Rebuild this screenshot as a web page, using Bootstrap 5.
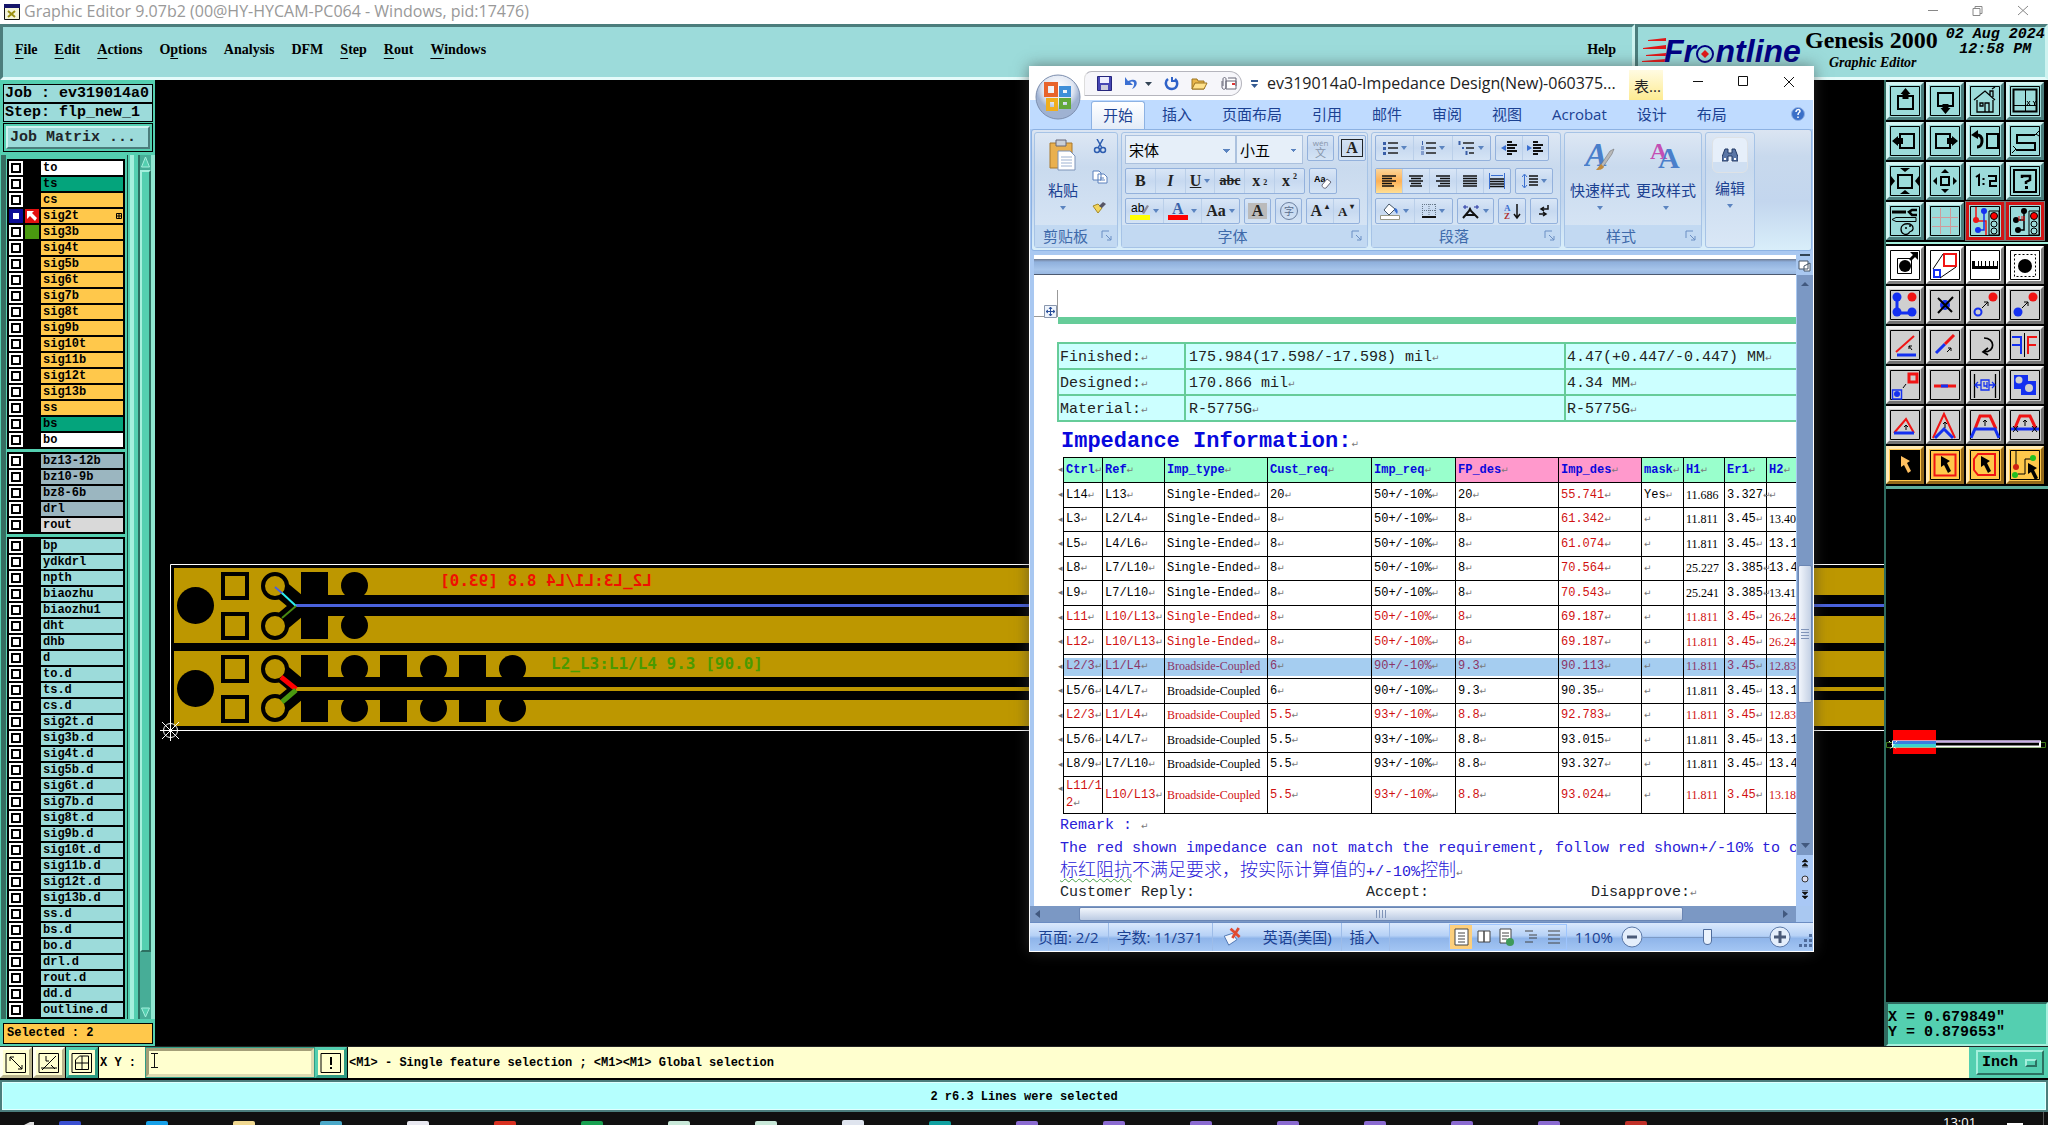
<!DOCTYPE html>
<html lang="zh-CN">
<head>
<meta charset="utf-8">
<meta name="viewport" content="width=device-width, initial-scale=1">
<title>Graphic Editor 9.07b2</title>
<link href="https://cdn.jsdelivr.net/npm/bootstrap@5.3.0/dist/css/bootstrap.min.css" rel="stylesheet">
<style>
:root{--aqua:#9cdbda;--sea:#54cfb0;--dark:#4b7d7c;--lite:#cdf3f0;--cream:#ffffcf;--gold:#ffc84b;--blue:#1b4192}
body{font-family:"Open Sans","Noto Sans CJK SC",sans-serif;background:#000;color:#000;line-height:1.2;height:100vh;overflow:hidden}
.btn{--bs-btn-padding-x:0;--bs-btn-padding-y:0;--bs-btn-border-width:0;--bs-btn-border-radius:0;line-height:1;border:0}
svg{display:block;flex:none}
.mono{font-family:"Liberation Mono",monospace}
.mono-b{font-family:"Liberation Mono",monospace;font-weight:700}
.s12{font-size:12px}.s15{font-size:15px}
.app-title{height:24px;background:#fff;color:#999;font-size:16px}
.app-menu{height:56px;font-family:"Liberation Serif",serif;font-weight:700;font-size:15px}
.bevel{background:var(--aqua);border:3px solid;border-color:var(--dark) var(--lite) #e4fbfa var(--dark)}
.app-menu a{color:#000;text-decoration:none}
.app-menu nav{gap:17px;padding-left:12px;font-size:14px;padding-bottom:3px}
.app-menu u{text-underline-offset:4px}
.brand-box{width:413px;height:56px}
.prod{font-size:24px;line-height:26px}
.prod-sub{font-size:14px;font-style:italic;line-height:20px}
.stamp{font-style:italic;font-size:15px;line-height:15px}

/* layer panel */
.side{width:155px;background:var(--sea)}
.side-box{background:var(--aqua);border:1px solid #000;height:19px;line-height:17px;padding-left:1px;margin:0 2px 0 3px;white-space:nowrap}
.matrix-frame{border:1px solid #000;margin:1px 2px 3px 3px;padding:2px;height:29px}
.matrix-btn{width:100%;height:23px;background:var(--aqua);border:2px solid;border-color:var(--lite) var(--dark) var(--dark) var(--lite);text-align:left;padding-left:2px}
.list-edge{width:7px;background:#376e62;border-left:1px solid var(--sea);border-right:1px solid var(--sea)}
.list-stripe{width:13px;background:linear-gradient(90deg,var(--sea) 0 2px,#17493d 2px 3px,var(--sea) 3px 5px,#a5f0dd 5px 9px,var(--sea) 9px)}
.lyr-group{background:#000;padding:2px 2px 2px 2px;display:flex;flex-direction:column;gap:2px;margin-bottom:3px;width:118px}
.lyr{display:flex;gap:2px;height:14px}
.lyr input{appearance:none;width:14px;height:14px;border:2px solid #fff;background:#fff;box-shadow:inset 0 0 0 2px #000;margin:0;flex:none}
.lyr.act input{border-color:#0b0b96;box-shadow:inset 0 0 0 2px #0b0b96}
.lyr .sw{width:14px;flex:none}
.lyr .nm{width:82px;background:var(--bg);line-height:14px;font-size:12px;padding-left:2px;white-space:nowrap;display:flex;justify-content:space-between;align-items:center}
.vs{width:17px;border-left:2px solid #2c7162;border-right:4px solid #8fe6d0;background:#47ad97}
.vs .th{height:782px;background:var(--sea);border:2px solid;border-color:#a5f0dd #2c7162 #2c7162 #a5f0dd}
.picked{background:var(--gold);border:1px solid #000;height:21px;line-height:19px;margin:4px 2px 2px 3px;padding-left:3px}

/* tool palette */
.pal{width:164px;background:#000;border-left:2px solid #2f6b60}
.pal-grid{display:grid;grid-template-columns:repeat(4,38px);gap:2px;padding:2px 0 2px 0}
.pal-split{border-top:2px solid #a5f0dd}
.tool{width:38px;height:38px;background:var(--aqua);border:3px solid !important;border-color:#d3f4f2 var(--dark) var(--dark) #d3f4f2 !important;padding:1px !important;display:block}
.tool.g{background:#cfcfcf;border-color:#f3f3f3 #737373 #737373 #f3f3f3 !important}
.tool.w{background:#fff;border-color:#fff #808080 #808080 #fff !important}
.tool.o{background:var(--gold);border-color:#ffe9b4 #93691a #93691a #ffe9b4 !important}
.tool.r{background:var(--aqua);border-color:#d11414 !important;outline:1px solid #777}
.mini{border-top:3px solid #5fae9c}
.readout{background:var(--sea);border:2px solid;border-color:#2f6b60 #a5f0dd #a5f0dd #2f6b60;height:44px;padding:6px 0;line-height:15px;font-size:15px;white-space:pre}

/* bottom bars */
.cmd{height:34px;border-bottom:2px solid #000;border-top:1px solid #222}
.cmd .cell{background:var(--cream);display:flex;align-items:center;padding-top:2px}
.cmd .tag{width:46px;padding-left:1px}
.cmd .msg{padding-left:1px}
.cbtn{width:32px;background:var(--cream);border:3px solid !important;border-color:#fffff0 #b9b48c #b9b48c #fffff0 !important;padding:1px 2px !important;margin-right:1px}
.cbtn.t{border-color:var(--sea) #2f9c84 #2f9c84 var(--sea) !important}
.xy{width:170px;height:31px;background:var(--cream);border:4px solid;border-color:#a39f78 #dedbb2 #dedbb2 #a39f78;outline:1px solid #2f9c84;outline-offset:-1px;font-size:13px;padding:0 2px;border-radius:0}
.ibeam{position:absolute;left:6px;top:6px}
.unit{width:79px;background:var(--sea);padding:3px 4px 3px 7px}
.unit select{width:100%;height:100%;appearance:none;background:var(--sea);border:2px solid;border-color:#a5f0dd #2c7162 #2c7162 #a5f0dd;padding:0 0 0 4px;font-size:15px;border-radius:0;color:#000}
.unit i{width:12px;height:8px;border:2px solid;border-color:#a5f0dd #2c7162 #2c7162 #a5f0dd;position:absolute;right:11px;top:12px}
.stat{height:32px;background:#b5fffe;border:2px solid #4b7d7c;outline:1px solid #dffffe;outline-offset:-3px;text-align:center;line-height:30px}
.task{height:13px;background:#101010;position:relative;overflow:hidden}
.task .clock{position:absolute;left:1943px;top:3px;color:#fff;font-size:13px}

/* document window */
.ww{position:absolute;right:234px;top:66px;width:785px;height:886px;background:#a9c8f1;border:1px solid #fff;box-shadow:0 0 14px rgba(60,60,60,.6);color:var(--blue);font-size:15px}
.ww .btn{color:var(--blue)}
.ww-title{height:33px;background:#fff;color:#222}
.qat{margin-left:54px;height:25px;width:158px;border:1px solid #b5b5bd;border-left-color:#ddd;border-radius:8px 13px 13px 0;background:#f6f6fa;gap:12px;padding-left:12px}
.orb{position:absolute;left:5px;top:7px;z-index:2}
.doc-name{width:360px;text-align:center;font-size:16px}
.ctx{width:34px;height:30px;background:linear-gradient(#fffbe2,#fdeb92);font-size:15px;line-height:32px;padding-left:5px;margin-top:3px;white-space:nowrap;color:#222}
.tabs{height:29px;background:#bfdbff;padding-left:61px}
.tabs a{padding:0 15px;line-height:29px;color:var(--blue);text-decoration:none;white-space:nowrap}
.tabs a.on{padding:0 11px;margin:1px 2px 0 0;background:linear-gradient(#fff,#e3ecf8);border:1px solid #8db2e3;border-bottom:0;border-radius:3px 3px 0 0;line-height:27px}
.tabs a:last-of-type{margin-right:auto}
.rib{height:122px;margin:0 1px;border:1px solid #8db2e3;border-radius:3px;background:linear-gradient(#dbe5f2,#c8d9ed 22%,#c3d6ee 60%,#d9eefa);padding:2px 2px;gap:3px}
.grp{border:1px solid #a6c3e6;border-radius:3px;display:flex;flex-direction:column;background:linear-gradient(#dde7f4,#c9daee 30%,#d9e7f6)}
.grp>.bd{height:93px;padding:2px 3px 0}
.grp>.cap{height:22px;line-height:22px;background:#c2d9f2;color:#3e6aaa;text-align:center;position:relative}
.grp>.cap svg{position:absolute;right:5px;top:5px}
.rb{border:1px solid #93b1dc;border-radius:2px;height:26px;display:flex;background:linear-gradient(#d9e6f6,#c7d9f0 50%,#d5e4f5);flex:none}
.rb .btn{flex:1 1 0;display:flex;align-items:center;justify-content:center;gap:3px;color:#222;border-right:1px solid #bacfe9}
.rb .btn:last-child{border-right:0}
.rb .btn.on{background:linear-gradient(#fbd59b,#fdb156 50%,#ffdf94)}
.w28{width:28px}.w27{width:27px}
.crt{border:3px solid transparent;border-top:4px solid #5b84c0;border-bottom:0;width:6px;height:4px;display:inline-block}
.rsel{appearance:none;border:1px solid #abc1de;background:#e6eff9;height:29px;color:#000;font-size:15px;padding:0 3px;border-radius:0;background-image:linear-gradient(45deg,transparent 50%,#5b84c0 50%),linear-gradient(-45deg,transparent 50%,#5b84c0 50%);background-size:4px 4px;background-position:calc(100% - 8px) 13px,calc(100% - 5px) 13px;background-repeat:no-repeat}
.ser{font-family:"Liberation Serif",serif;font-weight:700;font-size:16px}
.wen{flex-direction:column;gap:0 !important;font-size:8px;color:#8795ab !important}
.wen b{font-size:11px;font-weight:400;line-height:11px}
.big{display:flex;flex-direction:column;align-items:center;font-size:15px !important;white-space:nowrap}
.find{width:36px;height:36px;background:linear-gradient(#e6effa 70%,#cfdff2 70%)}
.band{height:16px;background:linear-gradient(#6f7b93,#8fb0dc 20%,#a6c4ea 70%,#9ab9e2);border-bottom:1px solid #4d5a70;margin-left:4px}
.page{background:#fff;margin-left:4px;overflow:hidden;position:relative}
.pad-page{padding-left:23px;padding-top:42px}
.rule{height:7px;background:#66cc99;margin-left:1px}
.t1{border-collapse:collapse;table-layout:fixed;width:800px;margin-top:18px;color:#222;font-size:15px}
.t1 td{border:2px solid #66cc99;background:#ccffff;height:26px;padding:3px 0 0 1px;line-height:20px}
.t1 td.val{padding-left:3px}
.h-imp{font-size:22px;color:#0808dd;margin:3px 0 0 4px;line-height:34px;height:32px;white-space:nowrap}
.t2{border-collapse:collapse;table-layout:fixed;width:764px;margin-left:6px;font-size:12px;color:#000}
.t2 td,.t2 th{border:1px solid #000;height:25px;padding:0 0 0 2px;line-height:17px;white-space:nowrap;position:relative}
.t2 tr:nth-child(even) td{height:24px}
.t2 th{background:#99ffcc;color:#0808dd}
.t2 th.pk{background:#ff99cc}
.t2 .rd,.t2 td.rd{color:#d01010}
.t2 .nar{font-family:"Liberation Serif",serif;font-size:12px}
.t2 tr.sel td{background:linear-gradient(#a5cdf0,#a5cdf0) center/100% 18px no-repeat;color:#8b3566}
.t2 tr:last-child td{height:37px}
.t2 tr>:first-child::before{content:"◂";position:absolute;left:-6px;top:6px;color:#777;font:9px "DejaVu Sans",sans-serif}
.pm{font-family:"DejaVu Sans",sans-serif;font-weight:400;font-size:9px;color:#777}
.note{color:#2a20d8;font-size:15px;line-height:23px;height:23px;white-space:pre;padding-left:3px}
.zh{font-size:18px;line-height:22px;font-family:"Liberation Mono","Noto Sans CJK SC",sans-serif;font-weight:300;height:21px}
.zh span.l{font-size:15px}
.squig{text-decoration:underline wavy #4aa04a 1px;text-underline-offset:2px}
.vbar{width:17px;background:#7b98c4;border-left:1px solid #a9c8f1}
.vbar .foot{background:#a9c8f5;height:51px}
.vbar .gap-low{height:136px}
.vthumb{height:138px;margin:0 1px;background:linear-gradient(90deg,#f2f6fc,#c3d0e4);border:1px solid #6b86b4;border-radius:2px;display:flex;align-items:center;justify-content:center}
.hbar{height:16px;background:#7b98c4;margin-right:17px}
.hthumb{width:604px;height:14px;background:linear-gradient(#f2f6fc,#bccbe3);border:1px solid #6b86b4;border-radius:2px;display:flex;align-items:center;justify-content:center}
.wstat{height:29px;background:linear-gradient(#dbe9fc,#b6d1f6 45%,#8fb5ea 55%,#a4c6f3);border-top:1px solid #6b8cc2;line-height:28px;white-space:nowrap}
.wstat .c{padding:0 9px 0 8px;border-right:1px solid #9dbce8}
.zr{width:126px;height:16px;appearance:none;background:linear-gradient(#7c9ac6,#7c9ac6) center/100% 1px no-repeat;margin:0}
.zr::-webkit-slider-thumb{appearance:none;width:9px;height:16px;background:#eaf2fc;border:1px solid #4f6c9c;border-radius:1px 1px 5px 5px}
</style>
<script src="https://cdn.jsdelivr.net/npm/bootstrap@5.3.0/dist/js/bootstrap.bundle.min.js"></script>
</head>
<body class="d-flex flex-column position-relative">

<header class="app-title d-flex align-items-center ps-1">
  <svg width="16" height="16" viewBox="0 0 16 16" class="me-1"><path d="M.5.5h15v15H.5z" fill="#f4f4d8" stroke="#111"/><path d="M0 0h16v4H0z" fill="#15156a"/><path d="M4 7l7 6M11 7l-7 6" stroke="#998f10" stroke-width="2"/></svg>
  <span class="flex-grow-1">Graphic Editor 9.07b2 (00@HY-HYCAM-PC064 - Windows, pid:17476)</span>
  <svg width="130" height="24" viewBox="0 0 130 24" fill="none" stroke="#888"><path d="M10 10.500h10M55 8.500h7v7h-7zM57 8V6.500h7v7h-2M100 6l10 9M110 6l-10 9"/></svg>
</header>

<div class="app-menu d-flex">
  <div class="bevel flex-grow-1 d-flex align-items-center">
    <nav class="d-flex flex-grow-1">
      <a href="#"><u>F</u>ile</a><a href="#"><u>E</u>dit</a><a href="#"><u>A</u>ctions</a><a href="#">O<u>p</u>tions</a><a href="#">Analysis</a><a href="#">DFM</a><a href="#"><u>S</u>tep</a><a href="#"><u>R</u>out</a><a href="#"><u>W</u>indows</a>
      <a href="#" class="ms-auto me-3">Help</a>
    </nav>
  </div>
  <div class="bevel brand-box d-flex">
    <svg width="167" height="44" viewBox="-3 0 167 44"><path d="M7 13l18-2v3L7 14zM2 21l23-3v4L2 22zM5 28l20-2v3L5 29zM1 34l24-2v3L1 35z" fill="#e01818"/><text x="23" y="35" font-family="Liberation Sans" font-weight="700" font-style="italic" font-size="32" fill="#000083">Fr<tspan fill="none">o</tspan>ntline</text><circle cx="64" cy="27" r="8" fill="#9cdbda" stroke="#000083" stroke-width="2"/><path d="M64 23l4 4-4 4-4-4z" fill="#e01818"/></svg>
    <div class="text-nowrap"><div class="prod">Genesis 2000</div><div class="prod-sub ps-4">Graphic Editor</div></div>
    <div class="stamp mono-b text-nowrap text-center ms-1 ps-1">02 Aug 2024<br>12:58 PM</div>
  </div>
</div>

<main class="d-flex flex-grow-1 overflow-hidden">
  <aside class="side d-flex flex-column pt-1 flex-shrink-0">
    <div class="side-box mono-b s15">Job : ev319014a0</div>
    <div class="side-box mono-b s15">Step: flp_new_1</div>
    <div class="matrix-frame"><button class="matrix-btn btn mono-b s15">Job Matrix ...</button></div>
    <div class="d-flex flex-grow-1 overflow-hidden">
      <div class="list-edge"></div>
      <div id="layers" class="mono-b pt-1"></div>
      <div class="list-stripe"></div>
      <div class="vs d-flex flex-column justify-content-between">
        <div><svg width="11" height="15"><path d="M5.500 2l4 10h-8z" fill="#54cfb0" stroke="#a5f0dd"/></svg><div class="th"></div></div>
        <svg width="11" height="13"><path d="M1.500 2h8l-4 9z" fill="#54cfb0" stroke="#a5f0dd"/></svg>
      </div>
    </div>
    <div class="picked mono-b s12">Selected : 2</div>
  </aside>

  <section class="flex-grow-1 overflow-hidden">
    <svg width="100%" height="966" role="img" aria-label="board">
      <g transform="translate(-155,-80)">
        <path d="M2200 564.500H170.500V730.500H2200" fill="none" stroke="#fff"/>
        <path d="M174 568h2000v75H174zM174 651h2000v75H174z" fill="#bd9700"/>
        <g fill="#000">
          <path d="M300 595h1900v21H300zM300 677h1900v10H300zM300 691h1900v9H300z"/>
          <path d="M301 572h27v67h-27zM301 655h27v32h-27zM301 691h27v31h-27zM380 655h27v32h-27zM380 691h27v31h-27zM459 655h27v32h-27zM459 691h27v31h-27z"/>
          <circle cx="195.500" cy="605.500" r="18.500"/><circle cx="195.500" cy="688.500" r="18.500"/>
          <circle cx="354.500" cy="585.500" r="13.500"/><circle cx="354.500" cy="625.500" r="13.500"/>
          <circle cx="354.500" cy="668.500" r="13.500"/><circle cx="354.500" cy="708.500" r="13.500"/><circle cx="433.500" cy="668.500" r="13.500"/><circle cx="433.500" cy="708.500" r="13.500"/><circle cx="512.500" cy="668.500" r="13.500"/><circle cx="512.500" cy="708.500" r="13.500"/>
        </g>
        <g fill="none" stroke="#000" stroke-width="18"><path d="M277 586l24 20-24 20M277 669l24 20-24 20"/></g>
        <g fill="#bd9700" stroke="#000" stroke-width="4"><path d="M223 574h24v24h-24zM223 614h24v24h-24zM223 657h24v24h-24zM223 697h24v24h-24z"/><circle cx="275" cy="586" r="12"/><circle cx="275" cy="626" r="12"/><circle cx="275" cy="669" r="12"/><circle cx="275" cy="708" r="12"/></g>
        <path d="M296 689h1900" stroke="#bd9700" stroke-width="4"/>
        <g fill="none"><path d="M296 605.500h1900" stroke="#4a62dc" stroke-width="3"/><path d="M275 587l8 7" stroke="#4a62dc" stroke-width="2"/><path d="M282 593l14 13" stroke="#2cf0f0" stroke-width="2"/><path d="M296 606l-14 12" stroke="#4a8a12" stroke-width="2"/><path d="M281 677l15 12" stroke="#f00" stroke-width="5"/><path d="M296 690l-14 12" stroke="#4a9a10" stroke-width="5"/></g>
        <text transform="translate(652,586) scale(-1,1)" fill="#f01000" font-family="DejaVu Sans Mono" font-weight="700" font-size="16">L2_L3:L1/L4 8.8 [93.0]</text>
        <text x="551" y="669" fill="#4a9a00" font-family="DejaVu Sans Mono" font-weight="700" font-size="16">L2_L3:L1/L4 9.3 [90.0]</text>
        <g stroke="#fff" fill="none"><circle cx="170.500" cy="730.500" r="7"/><path d="M160 730.500h21M170.500 720v21M162 722l17 17M179 722l-17 17"/></g>
      </g>
    </svg>
  </section>

  <aside class="pal d-flex flex-column flex-shrink-0">
    <div class="pal-grid" id="nav-tools"></div>
    <div class="pal-grid pal-split" id="edit-tools"></div>
    <div class="flex-grow-1 overflow-hidden mini">
      <svg width="162" height="500" role="img" aria-label="overview"><g transform="translate(-1886,-490)"><path d="M1893 731h43v24h-43z" fill="#f00"/><path d="M1886.500 743.500h159v5h-159z" fill="none" stroke="#3f7a18"/><path d="M1893 742.500h147v5h-147z" fill="#000" stroke="#fff" stroke-width="2"/><path d="M1893 742.500h147" stroke="#c9aee8" stroke-width="2"/><path d="M1893 742h43v3h-43z" fill="#3b7fe0"/><path d="M1893 745h43v3h-43z" fill="#3cd2cf"/><path d="M1889 742l8 9M1897 742l-8 9" stroke="#fff" stroke-dasharray="2"/></g></svg>
    </div>
    <div class="readout mono-b">X = 0.679849"
Y = 0.879653"</div>
  </aside>
</main>

<div class="cmd d-flex flex-shrink-0">
  <button class="btn cbtn" aria-label="diagonal"><svg width="22" height="22" viewBox="0 0 22 22" fill="none" stroke="#000"><path d="M1 1.500h19.500v19H1zM5 5l12 12M5 9V5h4M17 13v4h-4"/></svg></button>
  <button class="btn cbtn" aria-label="angle"><svg width="22" height="22" viewBox="0 0 22 22" fill="none" stroke="#000"><path d="M1 1.500h19.500v19H1zM4 18L18 4M8 4v5h3M3 16h16M13 13l4 4"/></svg></button>
  <button class="btn cbtn t" aria-label="grid"><svg width="22" height="22" viewBox="0 0 22 22" fill="none" stroke="#000"><path d="M1 1.500h19.500v19H1zM4.500 17.500V8l4-4h9v13.500zM11 4v13M4 11h13.500"/></svg></button>
  <label for="xy" class="cell tag mono-b s12">X Y :</label>
  <div class="position-relative"><input id="xy" class="xy mono" value=""><svg class="ibeam" width="7" height="15"><path d="M0 .5h7M3.500 0v15M0 14.500h7" stroke="#111"/></svg></div>
  <button class="btn cbtn t" aria-label="alert"><svg width="22" height="22" viewBox="0 0 22 22" fill="none" stroke="#000"><path d="M1 1.500h19.500v19H1z"/><path d="M11 5v8M11 15v2" stroke-width="2"/></svg></button>
  <div class="cell msg mono-b s12 flex-grow-1">&lt;M1&gt; - Single feature selection ; &lt;M1&gt;&lt;M1&gt; Global selection</div>
  <div class="unit position-relative"><select class="mono-b" aria-label="Unit"><option>Inch</option></select><i></i></div>
</div>
<div class="stat mono-b s12 flex-shrink-0">2 r6.3 Lines were selected</div>
<footer class="task flex-shrink-0">
  <svg width="100%" height="13" id="taskicons"></svg>
  <span class="clock">13:01</span>
</footer>

<section class="ww d-flex flex-column" aria-label="ev319014a0-Impedance Design">
  <svg class="orb" width="46" height="46" viewBox="0 0 46 46"><defs><radialGradient id="og" cy=".3"><stop offset="0" stop-color="#fff"/><stop offset=".7" stop-color="#dfe6f2"/><stop offset="1" stop-color="#9fb2d2"/></radialGradient></defs><circle cx="23" cy="23" r="22" fill="url(#og)" stroke="#7c8eae"/><g fill="none" stroke-width="4"><path d="M11 10h10v11H11z" stroke="#e8642c"/><path d="M26 14h8v7h-8z" stroke="#3f8fd8"/><path d="M13 26h8v9h-8z" stroke="#f0ae1e"/><path d="M26 26h8v7h-8z" stroke="#62a83a"/></g></svg>
  <div class="ww-title d-flex align-items-center">
    <div class="qat d-flex align-items-center">
      <svg width="15" height="15" viewBox="0 0 15 15"><path d="M.5.5h14v14H.5z" fill="#4646b4" stroke="#25257c"/><path d="M3 1h9v6H3z" fill="#eef"/><path d="M4 9h7v5H4z" fill="#ccd"/></svg>
      <svg width="28" height="15" viewBox="0 0 28 15"><path d="M1 1v8h8L6 6c4-2 6 2 2 7 7-3 6-11-1-9L4 5z" fill="#3b6fd2"/><path d="M21 6h7l-3.500 4z" fill="#345"/></svg>
      <svg width="15" height="15" viewBox="0 0 15 15" fill="none" stroke="#2f62c8" stroke-width="2.500"><path d="M4 3c-4 3-2 10 4 10 5 0 7-6 3-10"/><path d="M8 1v4h5" stroke-width="2"/></svg>
      <svg width="17" height="15" viewBox="0 0 17 15"><path d="M1 13V3h5l1 2h6v8z" fill="#e9b64a" stroke="#9c7420"/><path d="M1 13l3-6h12l-3 6z" fill="#ffe18a" stroke="#9c7420"/></svg>
      <svg width="17" height="15" viewBox="0 0 17 15" fill="#fff" stroke="#667"><path d="M6 5h10v8H6zM8 2h8v8"/><path d="M2 5v6c0 3 4 3 4 0V3c0-2-3-2-3 0v7" fill="none"/><path d="M12 7h3v2h-3z" fill="#d33" stroke="none"/></svg>
    </div>
    <svg width="20" height="12" viewBox="0 0 20 12"><path d="M9 2h7v2H9zM9 6h7l-3.500 4z" fill="#345a92"/></svg>
    <span class="doc-name text-nowrap">ev319014a0-Impedance Design(New)-060375...</span>
    <span class="ctx ms-2">表...</span>
    <svg width="150" height="33" viewBox="0 0 150 33" fill="none" stroke="#111"><path d="M30 14.500h10M75.500 9.500h9v9h-9zM121 10l10 10M131 10l-10 10"/></svg>
  </div>
  <nav class="tabs d-flex flex-shrink-0">
    <a href="#" class="on">开始</a><a href="#">插入</a><a href="#">页面布局</a><a href="#">引用</a><a href="#">邮件</a><a href="#">审阅</a><a href="#">视图</a><a href="#">Acrobat</a><a href="#">设计</a><a href="#">布局</a>
    <svg width="14" height="29" viewBox="0 0 14 29" class="me-2"><circle cx="7" cy="14" r="6.500" fill="#3a6fc8" stroke="#8fb0e4"/><path d="M5 12c0-3 4-3 4-1 0 2-2 1-2 4M7 16.500v1.500" stroke="#fff" stroke-width="1.500" fill="none"/></svg>
  </nav>
  <div class="rib d-flex flex-shrink-0">
    <div class="grp" style="width:84px">
      <div class="bd d-flex">
        <button class="btn big pt-1" style="width:50px">
          <svg width="28" height="32" viewBox="0 0 28 32"><path d="M1 4h22v25H1z" fill="#e9b04f" stroke="#a9792c"/><path d="M7 1h10v6H7z" fill="#c9cfd8" stroke="#667"/><path d="M9 12h12l5 5v14H9z" fill="#fff" stroke="#7d93b8"/><path d="M12 18h11M12 21h11M12 24h11M12 27h11" stroke="#9db2d2"/></svg>
          <span class="pt-2 mt-1">粘贴</span><i class="crt mt-2"></i></button>
        <div class="d-flex flex-column gap-3 pt-1 ps-1">
          <button class="btn" aria-label="cut"><svg width="16" height="15" viewBox="0 0 16 15" fill="none" stroke="#2d5db0" stroke-width="1.500"><path d="M5 0l5 9M11 0L6 9"/><circle cx="5" cy="11" r="2.500"/><circle cx="11" cy="11" r="2.500"/></svg></button>
          <button class="btn" aria-label="copy"><svg width="16" height="14" viewBox="0 0 16 14" fill="#fff" stroke="#5b80bc"><path d="M1 1h6l2 2v7H1zM6 4h6l3 3v6H6zM8 8h4M8 10h5"/></svg></button>
          <button class="btn" aria-label="format painter"><svg width="16" height="14" viewBox="0 0 16 14"><path d="M1 6l5-2 4 4-4 5z" fill="#f2d55c" stroke="#a48a2a"/><path d="M7 6l4-4 3 2-4 4z" fill="#556"/></svg></button>
        </div>
      </div>
      <div class="cap text-start ps-2">剪贴板<svg width="11" height="11" viewBox="0 0 11 11" fill="none" stroke="#6b8fc4"><path d="M1 8V1h7M5 5l5 5M10 6v4H6"/></svg></div>
    </div>
    <div class="grp" style="width:247px">
      <div class="bd d-flex flex-column gap-1">
        <div class="d-flex gap-1" style="height:29px"><div class="d-flex"><select class="rsel" style="width:111px" aria-label="字体"><option>宋体</option></select><select class="rsel" style="width:67px" aria-label="字号"><option>小五</option></select></div>
          <div class="rb w27"><button class="btn wen"><span>wén</span><b>文</b></button></div><div class="rb w28"><button class="btn ser"><span class="border border-dark px-1">A</span></button></div></div>
        <div class="d-flex gap-1">
          <div class="rb" style="width:180px"><button class="btn ser">B</button><button class="btn ser fst-italic">I</button><button class="btn ser"><u>U</u><i class="crt"></i></button><button class="btn ser"><s style="font-size:14px">abc</s></button><button class="btn ser">x<sub style="font-size:8px">2</sub></button><button class="btn ser">x<sup style="font-size:8px">2</sup></button></div>
          <div class="rb w28"><button class="btn" aria-label="clear"><svg width="18" height="17" viewBox="0 0 18 17"><text x="0" y="9" font-size="9" font-weight="700" font-family="Liberation Sans">Aa</text><path d="M8 12l5-6 4 3-5 6c-2 1-4-1-4-3z" fill="#fff" stroke="#667"/></svg></button></div>
        </div>
        <div class="d-flex gap-1">
          <div class="rb" style="width:115px"><button class="btn" aria-label="highlight"><svg width="20" height="20" viewBox="0 0 20 20"><text x="1" y="11" font-size="12" font-family="Liberation Sans">ab</text><path d="M12 12l5-8 2 1-5 8z" fill="#889"/><path d="M0 14h20v5H0z" fill="#ff0"/></svg><i class="crt"></i></button><button class="btn" aria-label="colour"><svg width="20" height="20" viewBox="0 0 20 20"><text x="4" y="13" font-size="16" font-weight="700" font-family="Liberation Serif" fill="#3a62a8">A</text><path d="M0 14h20v5H0z" fill="#f00"/></svg><i class="crt"></i></button><button class="btn ser">Aa<i class="crt"></i></button></div>
          <div class="rb w27"><button class="btn ser"><span style="background:#bbb" class="px-1">A</span></button></div>
          <div class="rb w27"><button class="btn" aria-label="enclose"><svg width="18" height="18" viewBox="0 0 18 18"><circle cx="9" cy="9" r="8.500" fill="none" stroke="#6b7f9f"/><text x="4" y="13" font-size="10" font-family="Noto Sans CJK SC" fill="#5a6c8c">字</text></svg></button></div>
          <div class="rb" style="width:54px"><button class="btn ser">A<sup style="font-size:8px">▴</sup></button><button class="btn ser"><span style="font-size:13px">A</span><sup style="font-size:8px">▾</sup></button></div>
        </div>
      </div>
      <div class="cap pe-4">字体<svg width="11" height="11" viewBox="0 0 11 11" fill="none" stroke="#6b8fc4"><path d="M1 8V1h7M5 5l5 5M10 6v4H6"/></svg></div>
    </div>
    <div class="grp" style="width:190px">
      <div class="bd d-flex flex-column gap-1">
        <div class="d-flex gap-1" style="height:29px">
          <div class="rb" style="width:116px"><button class="btn" aria-label="bullets"><svg width="15" height="14"><path d="M5 2h10M5 7h10M5 12h10" stroke="#222" stroke-width="1.500"/><path d="M0 1h3v3H0zM0 6h3v3H0zM0 11h3v3H0z" fill="#3a5fa8"/></svg><i class="crt"></i></button><button class="btn" aria-label="numbering"><svg width="15" height="14"><path d="M5 2h10M5 7h10M5 12h10" stroke="#222" stroke-width="1.500"/><path d="M1.500 0v4M0 6h3M0 8h3M0 11h3M0 13h3" stroke="#3a5fa8"/></svg><i class="crt"></i></button><button class="btn" aria-label="multilevel"><svg width="17" height="14"><path d="M5 2h11M8 7h8M11 12h5" stroke="#222" stroke-width="1.500"/><path d="M1.500 0v4M4 7h2M8.500 10v4" stroke="#3a5fa8" stroke-width="2"/></svg><i class="crt"></i></button></div>
          <div class="rb" style="width:54px"><button class="btn" aria-label="outdent"><svg width="16" height="14"><path d="M6 1h5M6 4h10M6 7h8M6 10h10M6 13h5" stroke="#111" stroke-width="2"/><path d="M5 4L0 7l5 3z" fill="#3a6fd0"/></svg></button><button class="btn" aria-label="indent"><svg width="16" height="14"><path d="M6 1h5M6 4h10M6 7h8M6 10h10M6 13h5" stroke="#111" stroke-width="2"/><path d="M0 4l5 3-5 3z" fill="#3a6fd0"/></svg></button></div>
        </div>
        <div class="d-flex gap-1">
          <div class="rb" style="width:136px"><button class="btn on" aria-label="left"><svg width="14" height="13"><path d="M0 1h14M0 3.500h10M0 6h14M0 8.500h10M0 11h12" stroke="#111" stroke-width="1.500"/></svg></button><button class="btn" aria-label="center"><svg width="14" height="13"><path d="M0 1h14M2 3.500h10M0 6h14M2 8.500h10M1 11h12" stroke="#111" stroke-width="1.500"/></svg></button><button class="btn" aria-label="right"><svg width="14" height="13"><path d="M0 1h14M4 3.500h10M0 6h14M4 8.500h10M2 11h12" stroke="#111" stroke-width="1.500"/></svg></button><button class="btn" aria-label="justify"><svg width="14" height="13"><path d="M0 1h14M0 3.500h14M0 6h14M0 8.500h14M0 11h14" stroke="#111" stroke-width="1.500"/></svg></button><button class="btn" aria-label="distribute"><svg width="16" height="16"><path d="M1 6h14M1 8.500h14M1 11h14M1 13.500h14" stroke="#111" stroke-width="1.500"/><path d="M.5 0v16M15.500 0v16M2 2.500h12" stroke="#3a6fd0"/></svg></button></div>
          <div class="rb" style="width:38px"><button class="btn" aria-label="line spacing"><svg width="16" height="16"><path d="M7 3h9M7 6h9M7 9h9M7 12h9" stroke="#111" stroke-width="1.500"/><path d="M2.500 2v12M0 4l2.500-3L5 4M0 12l2.500 3L5 12" stroke="#3a6fd0" fill="none"/></svg><i class="crt"></i></button></div>
        </div>
        <div class="d-flex gap-1">
          <div class="rb" style="width:78px"><button class="btn" aria-label="shading"><svg width="20" height="18"><path d="M4 8l5-6 6 5-6 6z" fill="#fff" stroke="#456"/><path d="M15 6c3 1 3 4 2 6l-3-4z" fill="#3a6fd0"/><path d="M.5 13.500h19v4H.500z" fill="#fff" stroke="#998"/></svg><i class="crt"></i></button><button class="btn" aria-label="borders"><svg width="14" height="14"><path d="M.5 0v12M7 0v12M13.500 0v12M0 .5h14M0 6.500h14" stroke="#678" stroke-dasharray="1 1"/><path d="M0 13h14" stroke="#111" stroke-width="2"/></svg><i class="crt"></i></button></div>
          <div class="rb" style="width:37px"><button class="btn" aria-label="asian layout"><svg width="18" height="15"><path d="M1 14l6-7 1-2 1 2 7 7M4 11h9" stroke="#111" stroke-width="2" fill="none"/><path d="M1 3h5M12 3h5M3 1v4M15 1v4" stroke="#2233a0"/></svg><i class="crt"></i></button></div>
          <div class="rb w28"><button class="btn" aria-label="sort"><svg width="17" height="17"><text y="8" font-size="9" font-weight="700" fill="#3a6fd0" font-family="Liberation Serif">A</text><text y="16" font-size="9" font-weight="700" fill="#b03030" font-family="Liberation Serif">Z</text><path d="M13 1v13M10 11l3 4 3-4" stroke="#111" fill="none" stroke-width="1.500"/></svg></button></div>
          <div class="rb w28"><button class="btn" aria-label="marks"><svg width="12" height="14"><path d="M10 1v4H4M6 3L3 5l3 2M1 10h6M5 8l3 2-3 2" stroke="#111" fill="none" stroke-width="1.500"/></svg></button></div>
        </div>
      </div>
      <div class="cap pe-4">段落<svg width="11" height="11" viewBox="0 0 11 11" fill="none" stroke="#6b8fc4"><path d="M1 8V1h7M5 5l5 5M10 6v4H6"/></svg></div>
    </div>
    <div class="grp" style="width:138px">
      <div class="bd d-flex justify-content-between">
        <button class="btn big pt-1" style="width:64px"><svg width="32" height="32" viewBox="0 0 32 32"><text x="1" y="27" font-size="34" font-style="italic" font-weight="700" font-family="Liberation Serif" fill="#4a7fcb">A</text><path d="M16 27l10-15 4-2-2 5-9 13z" fill="#b8b8b8" stroke="#666" stroke-width=".5"/><path d="M12 31l5-6 3 3c-2 3-5 3-8 3z" fill="#c08a3c"/></svg><span class="pt-2 mt-1">快速样式</span><i class="crt mt-2"></i></button>
        <button class="btn big pt-1" style="width:64px"><svg width="32" height="32" viewBox="0 0 32 32"><text x="0" y="20" font-size="24" font-weight="700" font-family="Liberation Serif" fill="#c44fb4">A</text><text x="8" y="29" font-size="30" font-weight="700" font-family="Liberation Serif" fill="#4a7fcb">A</text></svg><span class="pt-2 mt-1">更改样式</span><i class="crt mt-2"></i></button>
      </div>
      <div class="cap pe-4">样式<svg width="11" height="11" viewBox="0 0 11 11" fill="none" stroke="#6b8fc4"><path d="M1 8V1h7M5 5l5 5M10 6v4H6"/></svg></div>
    </div>
    <div class="grp align-items-center pt-1" style="width:50px">
      <button class="btn big"><span class="find d-flex align-items-center justify-content-center rounded border"><svg width="16" height="14" viewBox="0 0 16 14"><path d="M3 1h3v4h4V1h3l3 8v4h-6V8H6v5H0V9z" fill="#5a76a6" stroke="#223a66"/><path d="M2 10h2v2H2zM12 10h2v2h-2z" fill="#fff"/></svg></span><span class="pt-2">编辑</span><i class="crt mt-2"></i></button>
    </div>
  </div>

  <div class="d-flex flex-grow-1 overflow-hidden">
    <div class="flex-grow-1 overflow-hidden d-flex flex-column">
      <div class="pt-1"></div>
      <div class="page pt-1"></div>
      <div class="band flex-shrink-0"></div>
      <div class="page flex-grow-1">
        <svg width="30" height="50" class="position-absolute start-0 top-0"><path d="M23.500 15v27M0 41.500h10" stroke="#999"/><path d="M10.500 30.500h12v12h-12z" fill="#eef4fc" stroke="#8a97ad"/><path d="M16.500 32v9M12 36.500h9M15 34l1.500-2 1.500 2M15 39l1.500 2 1.500-2M14 35l-2 1.500 2 1.500M19 35l2 1.500-2 1.500" stroke="#2a4f9a" fill="none"/></svg>
        <div class="pad-page">
          <div class="rule"></div>
          <table class="t1 mono"><colgroup><col style="width:127px"><col style="width:380px"><col></colgroup><tbody>
            <tr><td>Finished:<span class="pm">↵</span></td><td class="val">175.984(17.598/-17.598) mil<span class="pm">↵</span></td><td>4.47(+0.447/-0.447) MM<span class="pm">↵</span></td></tr>
            <tr><td>Designed:<span class="pm">↵</span></td><td class="val">170.866 mil<span class="pm">↵</span></td><td>4.34 MM<span class="pm">↵</span></td></tr>
            <tr><td>Material:<span class="pm">↵</span></td><td class="val">R-5775G<span class="pm">↵</span></td><td>R-5775G<span class="pm">↵</span></td></tr>
          </tbody></table>
          <h1 class="h-imp mono-b">Impedance Information:<span class="pm">↵</span></h1>
          <table class="t2 mono"><colgroup><col style="width:39px"><col style="width:62px"><col style="width:103px"><col style="width:104px"><col style="width:84px"><col style="width:103px"><col style="width:83px"><col style="width:42px"><col style="width:41px"><col style="width:42px"><col></colgroup>
            <thead><tr id="imp-head"></tr></thead><tbody id="imp-body"></tbody></table>
          <div class="note mono">Remark : <span class="pm">↵</span></div>
          <div class="note mono">The red shown impedance can not match the requirement, follow red shown+/-10% to control</div>
          <div class="note zh"><span class="squig">标红阻抗</span>不满足要求，按实际计算值的<span class="l">+/-10%</span>控制<span class="pm">↵</span></div>
          <div class="note mono text-body">Customer Reply:                   Accept:                  Disapprove:<span class="pm">↵</span></div>
        </div>
      </div>
    </div>
    <div class="vbar d-flex flex-column flex-shrink-0">
      <svg width="16" height="38" viewBox="0 0 16 38"><path d="M0 0h16v24H0z" fill="#a9c8f1"/><path d="M3 4h10" stroke="#345" stroke-width="2"/><path d="M2 10h9v8H2zM7 15l6-3v8H7z" fill="#fff" stroke="#456"/><path d="M4 35l4-4 4 4z" fill="#42597f"/></svg>
      <div class="flex-grow-1"></div><div class="vthumb"><svg width="8" height="10"><path d="M0 .5h8M0 3.500h8M0 6.500h8M0 9.500h8" stroke="#8094b8"/></svg></div>
      <div class="gap-low"></div>
      <svg width="16" height="16"><path d="M4 4h9l-4.500 5z" fill="#42597f"/></svg>
      <div class="foot"><svg width="16" height="50" viewBox="0 0 16 50"><path d="M8 4l3 3H5zM8 8l3 3H5zM5 12h6M8 40l3-3H5zM8 44l3-3H5zM5 35.500h6" fill="#111" stroke="#111" stroke-width=".5"/><circle cx="8" cy="24" r="3" fill="#dde" stroke="#333"/></svg></div>
    </div>
  </div>
  <div class="hbar d-flex align-items-center justify-content-between flex-shrink-0">
    <svg width="49" height="14"><path d="M10 3v8L5 7z" fill="#42597f"/></svg><div class="hthumb me-auto"><svg width="10" height="8"><path d="M.5 0v8M3.500 0v8M6.500 0v8M9.500 0v8" stroke="#8094b8"/></svg></div><svg width="18" height="14"><path d="M5 3v8l5-4z" fill="#42597f"/></svg>
  </div>
  <div class="wstat d-flex flex-shrink-0 align-items-center">
    <span class="c">页面: 2/2</span><span class="c">字数: 11/371</span>
    <svg width="42" height="26" viewBox="0 0 42 26" class="ps-1"><path d="M8 12l9-3 5 7-9 6z" fill="#f4f6fb" stroke="#456fae"/><path d="M15 4l10 9M24 3l-7 11" stroke="#e04a30" stroke-width="3"/></svg>
    <span class="c">英语(美国)</span><span class="c">插入</span>
    <span class="d-flex ms-auto border border-primary-subtle">
      <svg width="116" height="24" viewBox="0 0 116 24"><path d="M0 0h22v24H0z" fill="#fdcf7c"/><g fill="#fff" stroke="#444"><path d="M5 4h13v16H5zM28 6h6v11h-6zM34 6h6v11h-6zM50 4h11v14H50z"/><path d="M8 8h7M8 11h7M8 14h7M8 17h7M52 8h7M52 11h7M52 14h5M75 6h8M79 10h8M79 13h8M75 17h8M98 6h12M98 10h12M98 14h12M98 18h12"/></g><circle cx="60" cy="17" r="4" fill="#3f9a5a"/></svg>
    </span>
    <span class="px-2">110%</span>
    <button class="btn" aria-label="zoom out"><svg width="22" height="22"><circle cx="11" cy="11" r="10" fill="#e4eefb" stroke="#5c79a8"/><path d="M6 11h10" stroke="#4a5a78" stroke-width="3"/></svg></button>
    <input type="range" class="zr" aria-label="缩放" min="0" max="100" value="51">
    <button class="btn" aria-label="zoom in"><svg width="22" height="22"><circle cx="11" cy="11" r="10" fill="#e4eefb" stroke="#5c79a8"/><path d="M5 11h12M11 5v12" stroke="#4a5a78" stroke-width="3"/></svg></button>
    <svg width="22" height="26" viewBox="0 0 22 26"><path d="M18 10h3v3h-3zM18 15h3v3h-3zM13 15h3v3h-3zM18 20h3v3h-3zM13 20h3v3h-3zM8 20h3v3H8z" fill="#4f6c9c"/></svg>
  </div>
</section>

<script>
// layer list
const O='#ffc84b',A='#9cdbda',S='#9bb6c0';
const sig=['sig2t','sig3b','sig4t','sig5b','sig6t','sig7b','sig8t','sig9b','sig10t','sig11b','sig12t','sig13b'];
const groups=[
 [['to','#fff'],['ts','#04a47c'],['cs',O],...sig.map(n=>[n,O]),['ss',O],['bs','#04a47c'],['bo','#fff']],
 [['bz13-12b',S],['bz10-9b',S],['bz8-6b',S],['drl',S],['rout','#d9d9d9']],
 [...['bp','ydkdrl','npth','biaozhu','biaozhu1','dht','dhb','d','to.d','ts.d','cs.d'],...sig.map(n=>n+'.d'),...['ss.d','bs.d','bo.d','drl.d','rout.d','dd.d','outline.d']].map(n=>[n,A])
];
const swatch={sig2t:'<svg class="sw" width="14" height="14"><path d="M0 0h14v14H0z" fill="#e41010"/><path d="M2 2h7L7 4l5 5-2 3-5-5-3 3z" fill="#fff"/></svg>',sig3b:'<svg class="sw" width="14" height="14"><path d="M0 0h14v14H0z" fill="#4a9a10"/></svg>'};
document.getElementById('layers').innerHTML=groups.map(g=>'<div class="lyr-group">'+g.map(([n,c])=>`<label class="lyr${n=='sig2t'?' act':''}"><input type="checkbox">${swatch[n]||'<span class="sw"></span>'}<span class="nm" style="--bg:${c}">${n}${n=='sig2t'?'<svg width="7" height="7"><path d="M.5.5h5v5h-5zM3 0v6M0 3h6" fill="none" stroke="#000"/></svg>':''}</span></label>`).join('')+'</div>').join('');

// tool palette: [name, drawing]
const light='<path d="M19 5h10v24H19z" fill="none" stroke="#000"/><circle cx="24" cy="10" r="3.500" fill="#f00" stroke="#000"/><circle cx="24" cy="18" r="3" fill="none" stroke="#000"/><circle cx="24" cy="25" r="3" fill="none" stroke="#000"/>';
const sq=(x,y,w,h,c='#000',s=2)=>`<path d="M${x} ${y}h${w}v${h}h-${w}z" fill="none" stroke="${c}" stroke-width="${s}"/>`;
const ln=(d,c='#000',s=2)=>`<path d="${d}" fill="none" stroke="${c}" stroke-width="${s}"/>`;
const fl=(d,c='#000')=>`<path d="${d}" fill="${c}"/>`;
const dot=(x,y,r,c)=>`<circle cx="${x}" cy="${y}" r="${r}" fill="${c}"/>`;
const R='#f01414',B='#1430f0';
const cur=(x,y,c='#000')=>`<path transform="translate(${x},${y})" d="M0 0l9 5-3 2 4 8-3 2-4-8-3 2z" fill="${c}"/>`;
const nav=[
['pan up',sq(8,10,15,13)+fl('M15.500 2l5 6h-2v5h-6V8h-2z')],
['pan down',sq(8,7,15,13)+fl('M15.500 28l5-6h-2v-4h-6v4h-2z')],
['home',ln('M4 14L15 5l10 9M7 14v12h16V14M10 17h3v3h-3zM15 26v-9h4v9M20 9V5h3v6M22 3l3-2','#000',1.3)],
['coordinates',sq(3.5,3.5,23,22)+ln('M15.500 3v22M3 19.500h23','#000',1)+ln('M17 15l3 4M20 15l-3 4M23 15l1.500 2 1.500-2M24.500 17v2','#000',1)],
['pan left',sq(10,8,14,14)+fl('M2 15l6-5v2h5v6H8v2z')],
['pan right',sq(6,8,14,14)+fl('M28 15l-6-5v2h-5v6h5v2z')],
['previous view',sq(17,8,11,14)+ln('M7 9c5 0 5 4 5 6s-1 6-5 6','#000',3)+fl('M1 9l7-5v9z')],
['serpentine',sq(7,9,0,0)+ln('M25 9H7v8h18v7H6','#000',2)+ln('M25 9l4-4M29 10l-3-2M6 23l-4 4M3 20l3 3','#000',1)],
['fit all',sq(8,9,14,13)+fl('M10 2h10l-5 4zM10 28h10l-5-4zM1 10v10l4-5zM29 10v10l-4-5z')],
['center',sq(11,11,8,8)+fl('M11 7h8l-4-4zM11 23h8l-4 4zM7 11v8l-4-4zM23 11v8l4-4z')],
['one to two','<path d="M6 11l3-2v11M18 10h8v5h-6v5h7" fill="none" stroke="#000" stroke-width="2"/><path d="M12.500 12h2v2h-2zM12.500 17h2v2h-2z"/>'],
['help',sq(4,4,22,22)+ln('M12 12V10h8v4l-4 2v2','#000',2.5)+fl('M15 20h3v3h-3z')],
['settings',ln('M2 6h14','#000',3)+ln('M27 4h-5l-3 2 3 3h5','#000',2.5)+ln('M2 13.500l4-2h20v4H6z','#000',1)+ln('M11 23c0-7 13-7 12 0-1 4-3 1-4 4-3 3-8 1-8-4zM15 22h2M19 20h2','#000',1.300)],
['grid',ln('M10.500 2v26M20.500 2v26M2 11.500h26M2 20.500h26','#d09a9a',1)],
['trace light',ln('M6 1v14h10v14',R,1.5)+ln('M14 7v17H8',B,1.500)+dot(14,5,3,B)+dot(6,14,3,R)+dot(8,24,3,B)+light,'r'],
['net light',ln('M6 14h8V6M8 24h6V14','#000',1.500)+dot(14,5,3,'#000')+dot(6,14,3,'#000')+dot(8,24,3,'#000')+ln('M9 10v5M12 10v5M14 10v5',R,1)+light,'r']];
const edit=[
['copy pad',sq(7.5,8.5,14,15,'#000',1)+dot(15,16,6,'#000')+ln('M20 10l5-5','#000',3)+fl('M20 2h8v8z'),'w'],
['resize',sq(14,4,12,12,R)+sq(4,20,6,7,B)+ln('M3 19L13 4M10 28l16-11','#000',1),'w'],
['ruler',fl('M2 19h26v-8h-1v5h-3v-5h-1v5h-3v-5h-1v5h-3v-5h-1v5h-3v-5h-1v5H9v-5H8v5H5v-5H2z'),'w'],
['select',`<path d="M4.500 4.500h21v22h-21z" fill="none" stroke="#000" stroke-dasharray="2"/>`+dot(15,16,7,'#000'),'w'],
['move chain',ln('M7 7v16h16',B,3)+dot(7,7,4.5,B)+dot(7,22,4.5,B)+dot(22,22,4.5,B)+dot(22,7,4.500,R)],
['delete',dot(15,15,5,B)+ln('M8 8l14 14M23 7L8 23')],
['copy',dot(23,7,4.5,R)+`<circle cx="8" cy="22" r="3.500" fill="none" stroke="${B}" stroke-width="2"/>`+ln('M12 18l6-6M14 12h4v4','#000',1)],
['move',dot(23,7,4.5,R)+dot(8,22,4.5,B)+ln('M12 18l6-6M14 12h4v4','#000',1)],
['rotate',ln('M6 22L24 6',R)+ln('M7 25h19',B,3)+ln('M22 20l-3-4M19 19v-3h3','#000',1)],
['stretch',ln('M6 23l9-9',B,3)+ln('M15 14l9-9',R,3)+ln('M17 22l4-4M18 18h3v3','#000',1)],
['arc',ln('M14 8c11 0 12 14 0 14M18 18l-5 4 5 3','#000',1.700)],
['mirror',ln('M2 7h9v17M2 15h9',B)+ln('M18 24V7h9M18 15h8',R)+ln('M14.500 3v24','#000',1)],
['swap pads',sq(19,4,8,8,R,3)+sq(2.500,20,9,9,B,1.500)+dot(7,24,3,B)+ln('M13 18l3-4','#000',1)],
['line',ln('M4 16h22',R,3)+ln('M11 16h7',B,3)],
['dimension',ln('M4.500 4v24M25.500 4v24','#000',1.300)+ln('M6 15h5M19 15h5M8 12l-3 3 3 3M22 12l3 3-3 3M11 10h8v10h-8zM14 12v4h3M17 12v6',B,1.3)],
['merge',fl('M4 5h14v6h8v14H11v-6H4z',B)+dot(9,10,3.500,'#cfcfcf')+dot(19,18,4,'#cfcfcf')],
['triangle',ln('M4 23L16 9l8 14',R)+ln('M4 23h20',B,3)+ln('M16 20v-5M14 17l2-2 2 2','#000',1)],
['peak',ln('M3 28L14 4l11 24',R)+ln('M5 28l9-9 9 9',B,3)+ln('M15 18v-6M13 14l2-2 2 2','#000',1)],
['trapezoid',ln('M5 19L10 6h10l6 13',R,3)+ln('M1 28l4-9h20l4 9',B,3)+ln('M15 16v-6M13 12l2-2 2 2','#000',1)],
['cut trapezoid',ln('M5 18L10 6h10l6 13',R,3)+ln('M1 19h28',B,3)+ln('M15 16v-6M13 12l2-2 2 2M3 16l5 6M8 16l-5 6M22 16l5 6M27 16l-5 6','#000',1)],
['pointer',fl('M0 0h30v30H0z')+cur(11,6,'#ffc060'),'o'],
['box select',sq(4.500,4.5,21,21,R)+cur(11,6),'o'],
['polygon select',ln('M8 4h17v21H8l-4-5V9z',R)+cur(11,6),'o'],
['net select',ln('M6 1v14M8 24h7V9h7','#000',1)+dot(6,17,3,'#d02010')+dot(5,25,3,'#20c020')+dot(23,8,3,'#20c020')+cur(18,13),'o']];
const draw=(list,base)=>list.map(([n,s,k])=>`<button class="btn tool ${k||base}" aria-label="${n}"><svg width="30" height="30" viewBox="0 0 30 30"><path d="M.5.5h29v29H.5z" fill="none" stroke="#000"/>${s}</svg></button>`).join('');
document.getElementById('nav-tools').innerHTML=draw(nav,'');
document.getElementById('edit-tools').innerHTML=draw(edit,'g');

// impedance table
const pm='<span class="pm">↵</span>';
document.getElementById('imp-head').innerHTML=['Ctrl','Ref','Imp_type','Cust_req','Imp_req','FP_des','Imp_des','mask','H1','Er1','H2'].map((h,i)=>`<th class="${i==5||i==6?'pk':''}">${h}${pm}</th>`).join('');
const SE='Single-Ended',BC='Broadside-Coupled';
const rows=[
['L14','L13',SE,'20','50+/-10%','20','55.741','Yes','11.686','3.327',''],
['L3','L2/L4',SE,'8','50+/-10%','8','61.342','','11.811','3.45','13.40'],
['L5','L4/L6',SE,'8','50+/-10%','8','61.074','','11.811','3.45','13.1'],
['L8','L7/L10',SE,'8','50+/-10%','8','70.564','','25.227','3.385','13.4'],
['L9','L7/L10',SE,'8','50+/-10%','8','70.543','','25.241','3.385','13.41'],
['L11','L10/L13',SE,'8','50+/-10%','8','69.187','','11.811','3.45','26.24','rd'],
['L12','L10/L13',SE,'8','50+/-10%','8','69.187','','11.811','3.45','26.24','rd'],
['L2/3','L1/L4',BC,'6','90+/-10%','9.3','90.113','','11.811','3.45','12.83','sel'],
['L5/6','L4/L7',BC,'6','90+/-10%','9.3','90.35','','11.811','3.45','13.1'],
['L2/3','L1/L4',BC,'5.5','93+/-10%','8.8','92.783','','11.811','3.45','12.83','rd'],
['L5/6','L4/L7',BC,'5.5','93+/-10%','8.8','93.015','','11.811','3.45','13.1'],
['L8/9','L7/L10',BC,'5.5','93+/-10%','8.8','93.327','','11.811','3.45','13.4'],
['L11/1<br>2','L10/L13',BC,'5.5','93+/-10%','8.8','93.024','','11.811','3.45','13.18','rd']];
// five-character H2 values use the narrow face, as H1 does
const narrow=(c,i)=>c==BC||i==8||i==10&&c.length==5;
document.getElementById('imp-body').innerHTML=rows.map((r,n)=>`<tr class="${r[11]||''}">`+r.slice(0,11).map((c,i)=>`<td class="${narrow(c,i)?'nar':''} ${i==6&&n<5?'rd':''}">${c}${c&&narrow(c,i)?'':pm}</td>`).join('')+'</tr>').join('');

// tops of the taskbar icons
const cols=['#e8e8e8','#3a4fd0','#16a0e8','#f0d890','#4aa8c8','#e8e8f0','#d83020','#18a050','#c8e8d8','#c8e8d8','#dfe4ee','#10a0a0','#8a6ad0','#8a6ad0','#8a6ad0','#8a6ad0','#8a6ad0','#8a6ad0','#8a6ad0','#c03028'];
document.getElementById('taskicons').innerHTML=cols.map((c,i)=>i?`<rect x="${59+(i-1)*87}" y="${i==10?8:9}" width="22" height="10" rx="2" fill="${c}"/>`:'<path d="M24 13l6-3h4v3z" fill="#ddd"/>').join('')+'<path d="M2007 11h16v2h-16z" fill="#fff"/><path d="M2043.500 0v13" stroke="#555"/>';
</script>
</body>
</html>
